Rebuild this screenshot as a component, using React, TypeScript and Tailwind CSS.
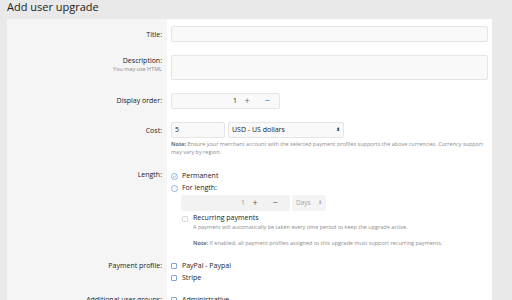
import React from "react";

const font = { fontFamily: '"Open Sans", "Noto Sans", sans-serif' };

function Label({ children, hint, className = "" }: { children: React.ReactNode; hint?: string; className?: string }) {
  return (
    <div className={`w-[160px] shrink-0 bg-[#f5f5f5] pr-[5px] text-right ${className}`}>
      <div className="text-[7px] leading-[9px] text-[#222]">{children}</div>
      {hint && <div className="text-[5.5px] leading-[8px] text-[#8c8c8c]">{hint}</div>}
    </div>
  );
}

function Check({ blue = true }: { blue?: boolean }) {
  return (
    <span
      className={`inline-block h-[6px] w-[6px] shrink-0 rounded-[1px] border ${blue ? "border-[#8aa5cf]" : "border-[#d8d8d8]"} bg-white`}
    />
  );
}

function Radio({ checked }: { checked?: boolean }) {
  return (
    <svg width="7" height="7" viewBox="0 0 14 14" className="shrink-0">
      <circle cx="7" cy="7" r="6" fill="none" stroke="#5b8fd0" strokeWidth="1.3" />
      {checked && <path d="M4 7.2 L6.2 9.3 L10 5" fill="none" stroke="#5b8fd0" strokeWidth="1.4" />}
    </svg>
  );
}

export default function App() {
  return (
    <div className="h-[300px] w-[512px] overflow-hidden bg-[#e9e9e9]" style={font}>
      <div className="h-[19px] pl-[7px] text-[11px] leading-[14px] text-[#222]">Add user upgrade</div>
      <div className="ml-[7px] mr-[20px] flex flex-col bg-white">
        {/* Title */}
        <div className="flex">
          <Label className="pt-[11px]">Title:</Label>
          <div className="flex-1 pl-[4px] pr-[4px] pt-[7px]">
            <div className="h-[16px] rounded-[2px] border border-[#e5e5e5] bg-[#f9f9f9]" />
          </div>
        </div>
        {/* Description */}
        <div className="flex">
          <Label className="pt-[14px]" hint="You may use HTML">Description:</Label>
          <div className="flex-1 pl-[4px] pr-[4px] pt-[13px]">
            <div className="h-[25px] rounded-[2px] border border-[#e5e5e5] bg-[#f9f9f9]" />
          </div>
        </div>
        {/* Display order */}
        <div className="flex">
          <Label className="pt-[16px]">Display order:</Label>
          <div className="flex-1 pl-[4px] pt-[13px]">
            <div className="flex h-[16px] w-[109px] items-center rounded-[2px] border border-[#e5e5e5] bg-[#f9f9f9] text-[7px]">
              <span className="w-[65px] text-right text-[#222]">1</span>
              <span className="w-[20px] text-center text-[9px] text-[#2577b1]">+</span>
              <span className="w-[20px] text-center text-[9px] text-[#2577b1]">−</span>
            </div>
          </div>
        </div>
        {/* Cost */}
        <div className="flex">
          <Label className="pt-[17px]">Cost:</Label>
          <div className="flex-1 pl-[4px] pr-[4px] pt-[13px]">
            <div className="flex gap-[3px]">
              <div className="flex h-[16px] w-[54px] items-center rounded-[2px] border border-[#e5e5e5] bg-[#f9f9f9] pl-[3px] text-[7px] text-[#222]">5</div>
              <div className="flex h-[16px] w-[116px] items-center justify-between rounded-[2px] border border-[#e5e5e5] bg-[#f9f9f9] px-[3px] text-[7px] text-[#222]">
                <span>USD - US dollars</span>
                <span className="text-[5px]">⬍</span>
              </div>
            </div>
            <div className="mt-[2px] text-[5.5px] leading-[8px] text-[#8c8c8c]">
              <b className="text-[#6e6e6e]">Note:</b> Ensure your merchant account with the selected payment profiles supports the above currencies. Currency support may vary by region.
            </div>
          </div>
        </div>
        {/* Length */}
        <div className="flex">
          <Label className="pt-[14px]">Length:</Label>
          <div className="flex-1 pl-[4px] pr-[4px] pt-[14px] text-[7px] text-[#222]">
            <div className="flex h-[12px] items-center gap-[4px]">
              <Radio checked />
              <span>Permanent</span>
            </div>
            <div className="flex h-[12px] items-center gap-[4px]">
              <Radio />
              <span>For length:</span>
            </div>
            <div className="ml-[10px] mt-[1px] flex gap-[2px]">
              <div className="flex h-[16px] w-[109px] items-center rounded-[2px] bg-[#f2f2f2] text-[7px] text-[#9a9a9a]">
                <span className="w-[64px] text-right">1</span>
                <span className="w-[20px] text-center text-[9px] text-[#555]">+</span>
                <span className="w-[20px] text-center text-[9px] text-[#555]">−</span>
              </div>
              <div className="flex h-[16px] w-[34px] items-center justify-between rounded-[2px] bg-[#f4f4f4] px-[4px] text-[6.5px] text-[#a5a5a5]">
                <span>Days</span>
                <span className="text-[5px]">⬍</span>
              </div>
            </div>
            <div className="ml-[11px] mt-[2px] flex items-start gap-[5px]">
              <div className="pt-[2px]"><Check blue={false} /></div>
              <div>
                <div className="text-[7px] leading-[10px] text-[#222]">Recurring payments</div>
                <div className="text-[5.5px] leading-[8px] text-[#8c8c8c]">A payment will automatically be taken every time period to keep the upgrade active.</div>
                <div className="mt-[8px] text-[5.5px] leading-[8px] text-[#8c8c8c]">
                  <b className="text-[#6e6e6e]">Note:</b> If enabled, all payment profiles assigned to this upgrade must support recurring payments.
                </div>
              </div>
            </div>
          </div>
        </div>
        {/* Payment profile */}
        <div className="flex">
          <Label className="pt-[14px]">Payment profile:</Label>
          <div className="flex-1 pl-[4px] pr-[4px] pt-[13px] text-[7px] text-[#222]">
            <div className="flex h-[12px] items-center gap-[5px]"><Check /><span>PayPal - Paypal</span></div>
            <div className="flex h-[12px] items-center gap-[5px]"><Check /><span>Stripe</span></div>
          </div>
        </div>
        {/* Additional user groups */}
        <div className="flex">
          <Label className="pt-[11px]">Additional user groups:</Label>
          <div className="flex-1 pl-[4px] pr-[4px] pt-[10px] text-[7px] text-[#222]">
            <div className="flex h-[12px] items-center gap-[5px]"><Check /><span>Administrative</span></div>
            <div className="flex h-[12px] items-center gap-[5px]"><Check /><span>Moderating</span></div>
          </div>
        </div>
      </div>
    </div>
  );
}
